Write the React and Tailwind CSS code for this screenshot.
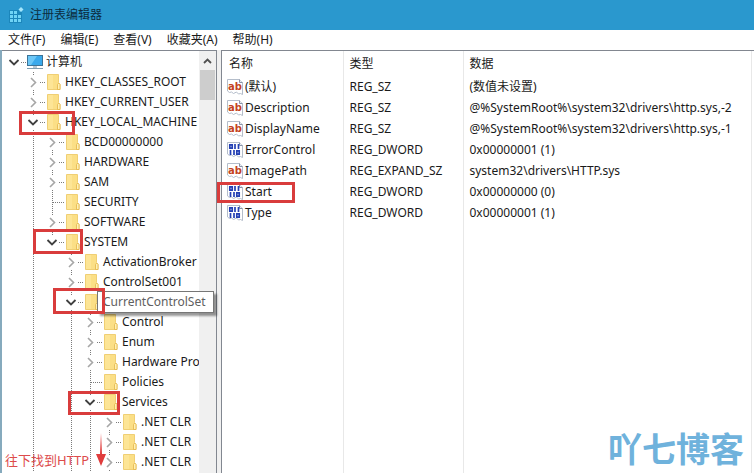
const TREE = [
    { name: '计算机', level: 0, state: 'open', icon: 'computer', last: true },
    { name: 'HKEY_CLASSES_ROOT', level: 1, state: 'closed' },
    { name: 'HKEY_CURRENT_USER', level: 1, state: 'closed' },
    { name: 'HKEY_LOCAL_MACHINE', level: 1, state: 'open' },
    { name: 'BCD00000000', level: 2, state: 'closed' },
    { name: 'HARDWARE', level: 2, state: 'closed' },
    { name: 'SAM', level: 2, state: 'closed' },
    { name: 'SECURITY', level: 2, state: 'leaf' },
    { name: 'SOFTWARE', level: 2, state: 'closed' },
    { name: 'SYSTEM', level: 2, state: 'open', last: true },
    { name: 'ActivationBroker', level: 3, state: 'closed' },
    { name: 'ControlSet001', level: 3, state: 'closed' },
    { name: 'CurrentControlSet', level: 3, state: 'open', tip: true },
    { name: 'Control', level: 4, state: 'closed' },
    { name: 'Enum', level: 4, state: 'closed' },
    { name: 'Hardware Pro', level: 4, state: 'closed' },
    { name: 'Policies', level: 4, state: 'leaf' },
    { name: 'Services', level: 4, state: 'open' },
    { name: '.NET CLR', level: 5, state: 'closed' },
    { name: '.NET CLR', level: 5, state: 'closed' },
    { name: '.NET CLR', level: 5, state: 'closed' },
];

const VALUES = [
    { name: '(默认)', type: 'REG_SZ', data: '(数值未设置)' },
    { name: 'Description', type: 'REG_SZ', data: '@%SystemRoot%\\system32\\drivers\\http.sys,-2' },
    { name: 'DisplayName', type: 'REG_SZ', data: '@%SystemRoot%\\system32\\drivers\\http.sys,-1' },
    { name: 'ErrorControl', type: 'REG_DWORD', data: '0x00000001 (1)' },
    { name: 'ImagePath', type: 'REG_EXPAND_SZ', data: 'system32\\drivers\\HTTP.sys' },
    { name: 'Start', type: 'REG_DWORD', data: '0x00000000 (0)' },
    { name: 'Type', type: 'REG_DWORD', data: '0x00000001 (1)' },
];

const MENUS = ['文件(F)', '编辑(E)', '查看(V)', '收藏夹(A)', '帮助(H)'];

function AppIcon() {
    return (
        <svg width="16" height="16" viewBox="0 0 16 16" aria-hidden="true">
            <path d="M1 3h10v2h3v11H1z" fill="#1b86bb" />
            <g fill="#6fd3f5">
                <path d="M2 4h3v3H2zM6 4h3v3H6zM2 8h3v3H2zM6 8h3v3H6zM10 8h3v3h-3zM2 12h3v3H2zM6 12h3v3H6zM10 12h3v3h-3z" />
                <path d="M13 0l2.500 2.500L13 5l-2.500-2.500z" fill="#a5e6fb" />
            </g>
        </svg>
    );
}

function ComputerIcon() {
    return (
        <svg width="18" height="16" viewBox="0 0 18 16" className="shrink-0" aria-hidden="true">
            <rect x="1.5" y="1.5" width="15" height="10" fill="#39a9ec" stroke="#3c7397" />
            <path d="M2 2h9L5 11H2z" fill="#6cc7f7" />
            <path d="M7 12h4v2H7z" fill="#b9c8d2" />
            <path d="M1 14.5h16" stroke="#7d9cb0" />
        </svg>
    );
}

function FolderIcon() {
    return (
        <svg width="14" height="16" viewBox="0 0 14 16" className="shrink-0" aria-hidden="true">
            <path d="M.5 .5h11v8l1.500 2v5H.5z" fill="#fbdf86" stroke="#f0cf74" />
            <path d="M1 1h5v14H1z" fill="#fde596" />
            <path d="M10.500 15.500V10.500l1.200-1.500 1.300 1.500v5z" fill="#fff0b4" stroke="#e3b548" strokeWidth=".8" />
        </svg>
    );
}

function ValueIcon({ type }) {
    return (
        <svg width="16" height="16" viewBox="0 0 16 16" className="shrink-0" aria-hidden="true">
            <path d="M.5 .5h12l3 3v12l-2-1-2 .5-2-2-3 1.500-2-1.500-2 .5-2-1.500z" fill="#fff" stroke="#b4bdca" />
            <path d="M12.500 .5v3h3" fill="#e8edf3" stroke="#8793a8" />
            {type !== 'REG_DWORD' ? (
                <text x="1" y="11" fontSize="10" fontWeight="700" fontFamily="DejaVu Sans" fill="#c4431f">ab</text>
            ) : (
                <path
                    d="M2.800 2.800h2.400v3.400H2.800zM8 2v5M11.500 2v5M3.500 8v5M7 8v5M9.800 8.800h2.400v3.400H9.800z"
                    fill="none"
                    stroke="#2440b4"
                    strokeWidth="1.700"
                />
            )}
        </svg>
    );
}

function Guide({ line }) {
    return (
        <svg width="19" height="20" viewBox="0 0 19 20" className="shrink-0" aria-hidden="true">
            {line && <path d="M10.500 0v20" stroke="#7a7a7a" strokeDasharray="1 1" />}
        </svg>
    );
}

// own column of a row: dotted joint with the expand arrow on top of it
function Joint({ level, state, last }) {
    return (
        <svg width="19" height="20" viewBox="0 0 19 20" className="shrink-0 overflow-visible" aria-hidden="true">
            {level > 0 && (
                <path d={last ? 'M10.500 0v10' : 'M10.500 0v20'} stroke="#7a7a7a" strokeDasharray="1 1" />
            )}
            <path d="M11 10.500h11" stroke="#7a7a7a" strokeDasharray="1 1" />
            {state !== 'leaf' && <path d="M3 3h14v14H3z" fill="#fff" />}
            {state === 'open' && <path d="M5.500 8l4.500 4.500L14.500 8" fill="none" stroke="#404040" strokeWidth="1.800" />}
            {state === 'closed' && <path d="M8 6l4.500 4.500L8 15" fill="none" stroke="#a6a6a6" strokeWidth="1.600" />}
        </svg>
    );
}

function TreeRow({ item, guides }) {
    return (
        <li className="flex h-5 items-center whitespace-nowrap">
            {guides.map((line, i) => <Guide key={i} line={line} />)}
            <Joint level={item.level} state={item.state} last={item.last} />
            <span className="flex w-[23px] shrink-0 items-center justify-center">
                {item.icon === 'computer' ? <ComputerIcon /> : <FolderIcon />}
            </span>
            {/* the tooltip carries the full name of a tipped row */}
            {!item.tip && <span>{item.name}</span>}
        </li>
    );
}

function Tree() {
    // remembers which levels still have siblings further down
    const open = [];
    return (
        <ul className="min-w-0 flex-1 overflow-hidden pt-px pl-0.5">
            {TREE.map((item, i) => {
                const guides = open.slice(0, item.level);
                open[item.level] = !item.last;
                return <TreeRow key={i} item={item} guides={guides} />;
            })}
        </ul>
    );
}

function Scrollbar() {
    return (
        <div className="flex w-[17px] shrink-0 flex-col bg-[#f0f0f0]">
            <button type="button" aria-label="向上滚动" className="flex h-[19px] items-center justify-center">
                <svg width="9" height="6" viewBox="0 0 9 6" aria-hidden="true">
                    <path d="M1 5l3.500-3.500L8 5" fill="none" stroke="#505050" strokeWidth="1.800" />
                </svg>
            </button>
            <div className="mx-px h-[30px] bg-[#cdcdcd]" />
        </div>
    );
}

function ValueTable() {
    return (
        <table className="h-full w-full table-fixed border-collapse text-left whitespace-nowrap">
            <colgroup>
                <col className="w-[121px]" />
                <col className="w-[120px]" />
                <col />
            </colgroup>
            <thead>
                <tr className="h-[25px]">
                    <th className="border-r border-[#e8e8e8] pl-[7px] font-normal">名称</th>
                    <th className="border-r border-[#e8e8e8] pl-1.5 font-normal">类型</th>
                    <th className="border-r border-[#e8e8e8] pl-1.5 font-normal">数据</th>
                </tr>
            </thead>
            <tbody>
                {VALUES.map((v) => (
                    <tr key={v.name} className="h-[21px]">
                        <td className="border-r border-[#e8e8e8] pl-[5px]">
                            <span className="flex items-center gap-0.5">
                                <ValueIcon type={v.type} />
                                {v.name}
                            </span>
                        </td>
                        <td className="border-r border-[#e8e8e8] pl-1.5">{v.type}</td>
                        <td className="border-r border-[#e8e8e8] pl-1.5">{v.data}</td>
                    </tr>
                ))}
                {/* keeps the column rules running to the bottom */}
                <tr aria-hidden="true">
                    <td className="border-r border-[#e8e8e8]" />
                    <td className="border-r border-[#e8e8e8]" />
                    <td className="border-r border-[#e8e8e8]" />
                </tr>
            </tbody>
        </table>
    );
}

function Marks() {
    return (
        <div className="pointer-events-none absolute inset-0">
            <div
                role="tooltip"
                className="absolute top-[291px] left-[97px] flex h-[22px] w-[117px] items-center border border-[#767676] bg-white px-[5px] text-[#606060] shadow-[3px_3px_2px_rgba(0,0,0,0.4)]"
            >
                CurrentControlSet
            </div>
            <div className="absolute top-[111px] left-[19px] h-[24px] w-[56px] border-3 border-[#d93c3c]" />
            <div className="absolute top-[229px] left-[33px] h-[25px] w-[50px] border-3 border-[#d93c3c]" />
            <div className="absolute top-[288px] left-[53px] h-[26px] w-[52px] border-3 border-[#d93c3c]" />
            <div className="absolute top-[391px] left-[68px] h-[24px] w-[52px] border-3 border-[#d93c3c]" />
            <div className="absolute top-[182px] left-[217px] h-[21px] w-[78px] border-3 border-[#d93c3c]" />
            <p className="absolute top-[452px] left-[5px] text-[13px] leading-4 text-[#dd4b4b]">往下找到HTTP</p>
            <svg width="12" height="33" viewBox="0 0 12 33" className="absolute top-[433px] left-[95px]" aria-hidden="true">
                <path d="M6 0l1 21h4L6 33 1 21h4z" fill="#e03c3c" />
            </svg>
            <p className="absolute right-[10px] bottom-[4px] text-[34px] leading-10 font-bold text-[#6fb2dc]">吖七博客</p>
        </div>
    );
}

export default function App() {
    return (
        <div className="relative flex h-screen flex-col overflow-hidden bg-white font-['Noto_Sans','Noto_Sans_CJK_SC',sans-serif] text-[12px] leading-4 text-[#1a1a1a]">
            <header className="flex h-[30px] shrink-0 items-center gap-1.5 bg-[#2a98ce] pl-2">
                <AppIcon />
                <h1 className="text-[#0c2c3e]">注册表编辑器</h1>
            </header>

            <nav className="flex h-5 shrink-0 items-center gap-[15px] pl-2">
                {MENUS.map((m) => <button key={m} type="button">{m}</button>)}
            </nav>

            <main className="flex min-h-0 flex-1 border-l-2 border-[#86aabd] bg-[#f0f0f0]">
                <section className="flex w-[215px] shrink-0 overflow-hidden border-t border-r border-[#828790] bg-white">
                    <Tree />
                    <Scrollbar />
                </section>
                <section className="ml-1 min-w-0 flex-1 border-t border-l border-[#828790] bg-white pr-0.5">
                    <ValueTable />
                </section>
            </main>

            <Marks />
        </div>
    );
}
